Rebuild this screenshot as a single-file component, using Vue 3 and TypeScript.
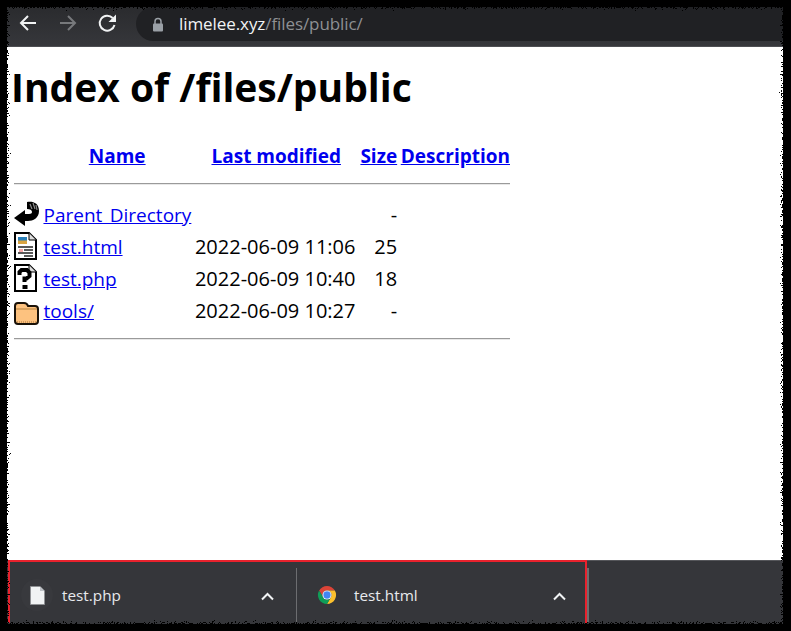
<script setup lang="ts">
interface Row { icon: string; name: string; date: string; size: string }
const rows: Row[] = [
  { icon: 'back', name: 'Parent Directory', date: '', size: '-' },
  { icon: 'html', name: 'test.html', date: '2022-06-09 11:06', size: '25' },
  { icon: 'php', name: 'test.php', date: '2022-06-09 10:40', size: '18' },
  { icon: 'folder', name: 'tools/', date: '2022-06-09 10:27', size: '-' },
]
</script>

<template>
  <div class="screen">
    <div class="window">
      <header class="toolbar">
        <svg class="nav" width="20" height="20" viewBox="0 0 20 20" fill="none" stroke="#f1f3f4" stroke-width="2"><path d="M18 10H3M10 3l-7 7 7 7" /></svg>
        <svg class="nav" width="20" height="20" viewBox="0 0 20 20" fill="none" stroke="#77797c" stroke-width="2"><path d="M2 10h15M10 3l7 7-7 7" /></svg>
        <svg class="nav" width="20" height="20" viewBox="0 0 20 20" fill="none"><path d="M16.500 12a7.500 7.500 0 1 1-1.800-7" stroke="#f1f3f4" stroke-width="2" /><path d="M18 1.500v7.500h-7.500z" fill="#f1f3f4" /></svg>
        <div class="omnibox">
          <svg width="12" height="15" viewBox="0 0 12 15"><path d="M3 7V4.500a3 3 0 0 1 6 0V7" fill="none" stroke="#9aa0a6" stroke-width="1.5" /><rect x="1" y="6.500" width="10" height="8" rx="1" fill="#9aa0a6" /></svg>
          <span class="url"><span class="host">limelee.xyz</span>/files/public/</span>
        </div>
      </header>
      <main class="page">
        <h1>Index of /files/public</h1>
        <table>
          <thead>
            <tr>
              <th class="c-icon"></th>
              <th class="c-name"><a>Name</a></th>
              <th class="c-date"><a>Last modified</a></th>
              <th class="c-size"><a>Size</a></th>
              <th class="c-desc"><a>Description</a></th>
            </tr>
            <tr><th colspan="5" class="rule"><hr /></th></tr>
          </thead>
          <tbody>
            <tr v-for="r in rows" :key="r.name">
              <td class="c-icon">
                <svg v-if="r.icon === 'back'" class="up" width="26" height="26" viewBox="0 0 26 26">
                  <path d="M13 1c6-1 12 1 12 9 0 7-6 10-11 10H11v5L0 17l11-8v4h4c2 0 3-1 3-2 0-2-2-3-5-3z" fill="#000" />
                  <path d="M16 3l2 5M19 2l2 6M22 4l1 5" stroke="#8a8a8a" stroke-width="1.200" />
                </svg>
                <svg v-else-if="r.icon === 'html'" class="up" width="23" height="28" viewBox="0 0 23 28">
                  <path d="M1 1h14l7 7v19H1z" fill="#fff" stroke="#000" stroke-width="2" />
                  <path d="M15 1v7h7" fill="#ddd" stroke="#000" />
                  <rect x="4" y="5" width="9" height="7" fill="#d9a441" />
                  <rect x="4" y="5" width="9" height="3.500" fill="#2a7fb8" />
                  <path d="M4 15h15M10 18h9M4 21h15M10 24h9" stroke="#222" stroke-width="1.500" />
                  <rect x="5" y="17" width="4" height="3" fill="#f3a6a6" />
                </svg>
                <svg v-else-if="r.icon === 'php'" class="up" width="23" height="28" viewBox="0 0 23 28">
                  <path d="M1 1h14l7 7v19H1z" fill="#fff" stroke="#000" stroke-width="2" />
                  <path d="M15 1v7h7" fill="#ddd" stroke="#000" />
                  <path d="M5.500 11V8l2-2h5.500l2.500 2.500v3.500l-3 2.500h-2v3.500" fill="none" stroke="#000" stroke-width="4" />
                  <rect x="8.500" y="21" width="5" height="4" fill="#000" />
                </svg>
                <svg v-else class="down" width="25" height="23" viewBox="0 0 25 23">
                  <path d="M1 4q0-3 3-3h6q3 0 4 3h7q3 0 3 3v12q0 3-3 3H4q-3 0-3-3z" fill="#fdc27f" stroke="#1a1208" stroke-width="2" />
                  <path d="M2 7h21" stroke="#b5813f" />
                  <path d="M3 20h19" stroke="#a8753d" stroke-width="1" stroke-dasharray="1 1" />
                </svg>
              </td>
              <td class="c-name"><a>{{ r.name }}</a></td>
              <td class="c-date">{{ r.date }}</td>
              <td class="c-size">{{ r.size }}</td>
              <td class="c-desc"></td>
            </tr>
            <tr><th colspan="5" class="rule bottom"><hr /></th></tr>
          </tbody>
        </table>
      </main>
      <footer class="shelf">
        <div class="item first">
          <span class="file-halo">
            <svg width="15" height="19" viewBox="0 0 15 19"><path d="M0.500 0.500h9.500l4.500 4.500v13.500H0.500z" fill="#f1f3f4" stroke="#8f9194" /><path d="M10 0.500v4.500h4.500z" fill="#bdc1c6" /></svg>
          </span>
          <span class="fname">test.php</span>
          <svg class="caret" width="13" height="9" viewBox="0 0 13 9" fill="none" stroke="#f1f3f4" stroke-width="2"><path d="M1 7.500L6.500 2 12 7.500" /></svg>
        </div>
        <div class="item second">
          <svg width="20" height="20" viewBox="2 2 44 44">
            <path d="M6.680 14A20 20 0 0 1 41.320 14H24A10 10 0 0 0 15.340 29Z" fill="#db4437" />
            <path d="M41.320 14A20 20 0 0 1 24 44L32.660 29A10 10 0 0 0 24 14Z" fill="#fbc02d" />
            <path d="M24 44A20 20 0 0 1 6.680 14L15.340 29A10 10 0 0 0 32.660 29Z" fill="#0f9d58" />
            <circle cx="24" cy="24" r="10" fill="#fff" />
            <circle cx="24" cy="24" r="8" fill="#4285f4" />
          </svg>
          <span class="fname">test.html</span>
          <svg class="caret" width="13" height="9" viewBox="0 0 13 9" fill="none" stroke="#f1f3f4" stroke-width="2"><path d="M1 7.500L6.500 2 12 7.500" /></svg>
        </div>
        <div class="end-sep"></div>
      </footer>
    </div>
    <svg class="defs" width="0" height="0">
      <filter id="rough" x="0" y="0" width="100%" height="100%">
        <feTurbulence type="fractalNoise" baseFrequency="0.9" numOctaves="2" seed="4" />
        <feDisplacementMap in="SourceGraphic" scale="14" xChannelSelector="R" yChannelSelector="G" />
      </filter>
    </svg>
    <div class="frame"></div>
  </div>
</template>

<style scoped>
.screen {
  position: relative;
  width: 791px;
  height: 631px;
  background: #000;
  padding: 7px 8px 7px 7px;
  box-sizing: border-box;
  overflow: hidden;
}
.window {
  height: 100%;
  display: flex;
  flex-direction: column;
  overflow: hidden;
}
.toolbar {
  height: 40px;
  flex: none;
  display: flex;
  align-items: flex-start;
  gap: 20px;
  padding: 0 0 0 11px;
  background: linear-gradient(#2a2b2e, #36373b);
  border-bottom: 1px solid #4d4e52;
  box-sizing: border-box;
}
.nav { flex: none; margin-top: 6px; }
.omnibox {
  margin-left: -2px;
  flex: 1;
  height: 34px;
  border-radius: 17px 0 0 17px;
  background: #202124;
  display: flex;
  align-items: center;
  gap: 15px;
  padding-left: 16px;
}
.url {
  font: 17px "Open Sans", sans-serif;
  color: #8e9093;
  letter-spacing: -0.08px;
  margin-top: -2px;
}
.host { color: #f1f3f4; }
.page {
  flex: 1;
  min-height: 0;
  background: #fff;
  color: #000;
  font-family: "Open Sans", sans-serif;
  padding: 0 4px;
}
h1 {
  margin: 15px 0 0;
  font-size: 39px;
  line-height: 50px;
  font-weight: 700;
  white-space: nowrap;
}
table {
  margin: 28px 0 0 -1px;
  border-collapse: separate;
  border-spacing: 2px 0;
  table-layout: fixed;
  width: 502px;
  font-size: 19px;
}
th, td { padding: 0; height: 32px; white-space: nowrap; box-sizing: border-box; }
a { color: #00e; text-decoration: underline; }
th a { font-weight: 700; }
.c-icon { width: 29px; text-align: left; padding-left: 2px; }
.c-icon svg { display: block; }
.c-icon .up { margin-bottom: 2px; }
.c-icon .down { margin-top: 4px; }
.c-name { width: 147px; text-align: left; word-spacing: 2.5px; }
th.c-name { text-align: center; padding-right: 2px; }
.c-date { width: 160px; text-align: left; font-size: 20px; padding-bottom: 1px; }
th.c-date { text-align: center; font-size: 19px; padding-bottom: 0; }
.c-size { width: 37px; text-align: right; font-size: 20px; padding-bottom: 1px; }
th.c-size { font-size: 19px; padding-bottom: 0; }
.c-desc { width: 109px; text-align: right; }
.rule { height: 27px; vertical-align: top; padding-top: 11px; }
.rule hr { margin: 0 0 0 2px; border: 0; border-top: 1px solid #9a9a9a; border-bottom: 1px solid #e8e8e8; }
.rule.bottom { padding-top: 11px; }
.shelf {
  height: 64px;
  flex: none;
  background: #35363a;
  display: flex;
  align-items: flex-end;
  padding-bottom: 2px;
  box-sizing: border-box;
  box-shadow: inset 0 1px 0 #55565a;
  position: relative;
  color: #e8eaed;
}
.shelf::before {
  content: "";
  position: absolute;
  left: 1px;
  top: 0;
  width: 579px;
  height: 63px;
  border: 2px solid #e8222d;
  border-bottom: 0;
  box-sizing: border-box;
  pointer-events: none;
}
.item {
  height: 54px;
  display: flex;
  align-items: center;
  box-sizing: border-box;
  position: relative;
  flex: none;
}
.first { width: 290px; border-right: 1px solid #6c6d70; padding-left: 14px; }
.second { width: 290px; padding-left: 20px; gap: 17px; }
.file-halo {
  width: 32px;
  height: 32px;
  border-radius: 50%;
  background: #38393d;
  display: flex;
  align-items: center;
  justify-content: center;
  margin-right: 9px;
}
.fname { font: 15.3px "Open Sans", sans-serif; }
.caret { position: absolute; right: 22px; top: 24px; }
.second .caret { right: 21px; }
.end-sep { width: 2px; height: 54px; background: #6c6d70; }
.defs { position: absolute; }
.frame {
  position: absolute;
  inset: 0;
  border-style: solid;
  border-color: #000;
  border-width: 7px 8px 7px 7px;
  filter: url(#rough);
  pointer-events: none;
}
</style>
